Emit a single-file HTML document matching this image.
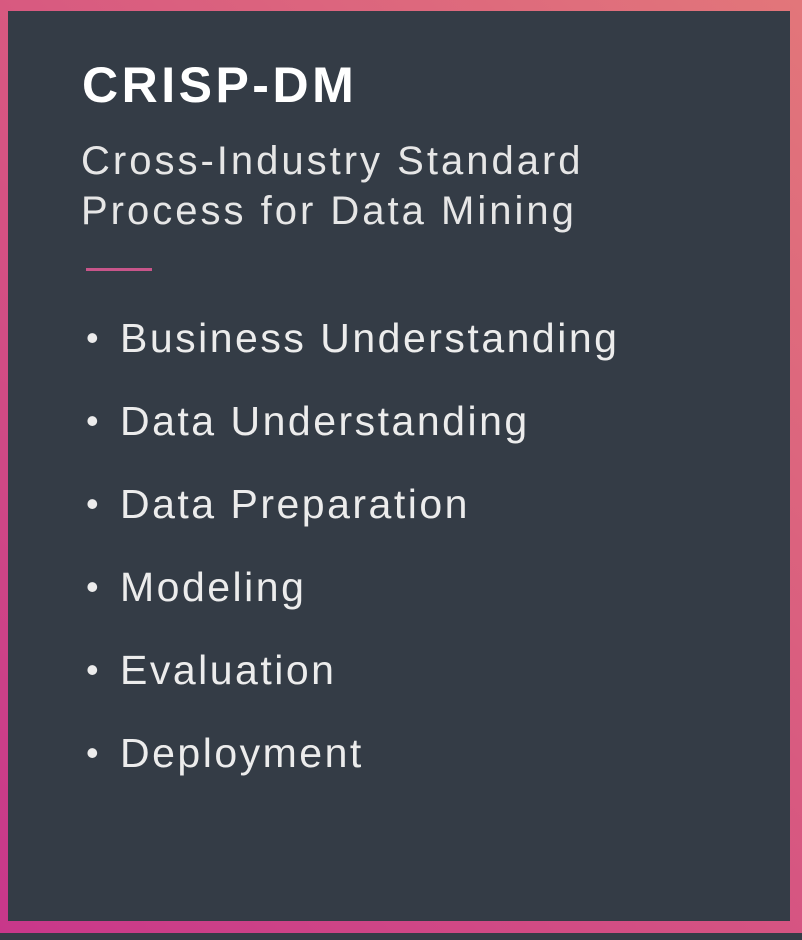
<!DOCTYPE html>
<html><head><style>
html,body{margin:0;padding:0;width:802px;height:940px;background:#343c46;overflow:hidden}
.frame{position:absolute;left:0;top:0;width:802px;height:933px;background:linear-gradient(45deg,#c8378a 0%,#d85a80 55%,#e2767a 100%)}
.inner{position:absolute;left:8px;top:11px;right:12px;bottom:12px;background:#343c46}
.t{position:absolute;font-family:"Liberation Sans",sans-serif;color:#f2f2f2;white-space:nowrap}
h1{position:absolute;left:82px;top:56px;margin:0;font:bold 50px "Liberation Sans",sans-serif;color:#fff;letter-spacing:3.5px}
.sub{left:81px;top:136px;font-size:40px;line-height:50px;color:#e6e6e6;letter-spacing:3px}
.line{position:absolute;left:86px;top:268px;width:66px;height:3px;background:#c8558a}
ul{position:absolute;left:86px;top:305px;margin:0;padding:0;list-style:none;font:41px "Liberation Sans",sans-serif;color:#ececec;letter-spacing:2.5px}
li{height:83px;line-height:66px;white-space:nowrap}
li:before{content:"•";font-size:36px;display:inline-block;width:34px;vertical-align:top;letter-spacing:0}
</style></head><body>
<div class="frame"><div class="inner"></div></div>
<h1>CRISP-DM</h1>
<div class="t sub">Cross-Industry Standard<br>Process for Data Mining</div>
<div class="line"></div>
<ul>
<li>Business Understanding</li>
<li>Data Understanding</li>
<li>Data Preparation</li>
<li>Modeling</li>
<li>Evaluation</li>
<li>Deployment</li>
</ul>
</body></html>
